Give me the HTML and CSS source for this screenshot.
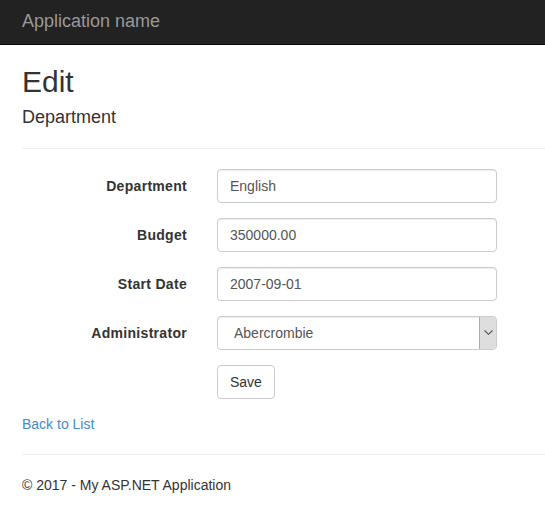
FILE: index.html
```html
<!DOCTYPE html>
<html lang="en">
<head>
<meta charset="utf-8">
<title>Edit - My ASP.NET Application</title>
<link rel="stylesheet" href="styles.css">
</head>
<body>
<header class="navbar">
  <a class="brand" href="#">Application name</a>
</header>
<main class="body-content">
  <h2 class="page-title">Edit</h2>
  <form class="form-horizontal">
    <h4 class="subtitle">Department</h4>
    <hr class="divider">
    <div class="form-group">
      <label class="control-label">Department</label>
      <div class="control"><input class="form-control" type="text" value="English"></div>
    </div>
    <div class="form-group">
      <label class="control-label">Budget</label>
      <div class="control"><input class="form-control" type="text" value="350000.00"></div>
    </div>
    <div class="form-group">
      <label class="control-label">Start Date</label>
      <div class="control"><input class="form-control" type="text" value="2007-09-01"></div>
    </div>
    <div class="form-group">
      <label class="control-label">Administrator</label>
      <div class="control select-wrap">
        <select class="form-control select-control">
          <option>Abercrombie</option>
        </select>
        <span class="select-arrow">
          <svg width="9" height="5" viewBox="0 0 9 5"><path d="M0.5 0.5 L4.5 4.3 L8.5 0.5" fill="none" stroke="#555" stroke-width="1.1"/></svg>
        </span>
      </div>
    </div>
    <div class="form-group">
      <div class="control offset"><button class="btn" type="button">Save</button></div>
    </div>
  </form>
  <div class="back-link"><a href="#">Back to List</a></div>
  <hr class="divider">
  <footer class="footer">
    <p>© 2017 - My ASP.NET Application</p>
  </footer>
</main>
</body>
</html>
```

FILE: styles.css
```css
html, body {
  margin: 0;
  padding: 0;
}
body {
  font-family: "Liberation Sans", Arial, Helvetica, sans-serif;
  font-size: 14px;
  line-height: 20px;
  color: #333;
  background: #fff;
  overflow: hidden;
}
.navbar {
  height: 44px;
  background: #222;
  border-bottom: 1px solid #080808;
  box-sizing: content-box;
}
.brand {
  display: block;
  padding: 11px 0 0 22px;
  font-size: 18px;
  line-height: 20px;
  color: #999;
  text-decoration: none;
}
.body-content {
  padding-left: 22px;
}
.page-title {
  margin: 20px 0 10px;
  font-size: 30px;
  line-height: 33px;
  font-weight: 500;
}
.form-horizontal {
  margin: 0;
}
.subtitle {
  margin: 10px 0 10px;
  font-size: 18px;
  line-height: 19.8px;
  font-weight: 500;
}
.divider {
  margin: 20px 0;
  border: 0;
  border-top: 1px solid #eee;
  height: 0;
}
.form-group {
  display: flex;
  margin-bottom: 15px;
}
.control-label {
  width: 165px;
  flex: none;
  text-align: right;
  padding-top: 7px;
  font-weight: bold;
  letter-spacing: 0.3px;
  box-sizing: border-box;
  height: 34px;
}
.control {
  margin-left: 30px;
  width: 280px;
}
.control.offset {
  margin-left: 195px;
}
.form-control {
  display: block;
  width: 280px;
  height: 34px;
  box-sizing: border-box;
  padding: 6px 12px;
  margin: 0;
  font-family: inherit;
  font-size: 14px;
  line-height: 20px;
  color: #555;
  background: #fff;
  border: 1px solid #ccc;
  border-radius: 4px;
  box-shadow: inset 0 1px 1px rgba(0,0,0,.075);
  outline: none;
}
.select-wrap {
  position: relative;
}
.select-control {
  -webkit-appearance: none;
  appearance: none;
  padding-left: 16px;
}
.select-arrow {
  position: absolute;
  top: 1px;
  right: 1px;
  width: 17px;
  height: 32px;
  background: #dedede;
  border-left: 1px solid #ababab;
  border-radius: 0 3px 3px 0;
  box-sizing: border-box;
  display: flex;
  align-items: center;
  justify-content: center;
}
.btn {
  display: inline-block;
  height: 34px;
  box-sizing: border-box;
  padding: 6px 12px;
  font-family: inherit;
  font-size: 14px;
  line-height: 20px;
  color: #333;
  background: #fff;
  border: 1px solid #ccc;
  border-radius: 4px;
  cursor: pointer;
}
.back-link a {
  color: #428bca;
  text-decoration: none;
}
.footer p {
  margin: 0 0 10px;
}
```
